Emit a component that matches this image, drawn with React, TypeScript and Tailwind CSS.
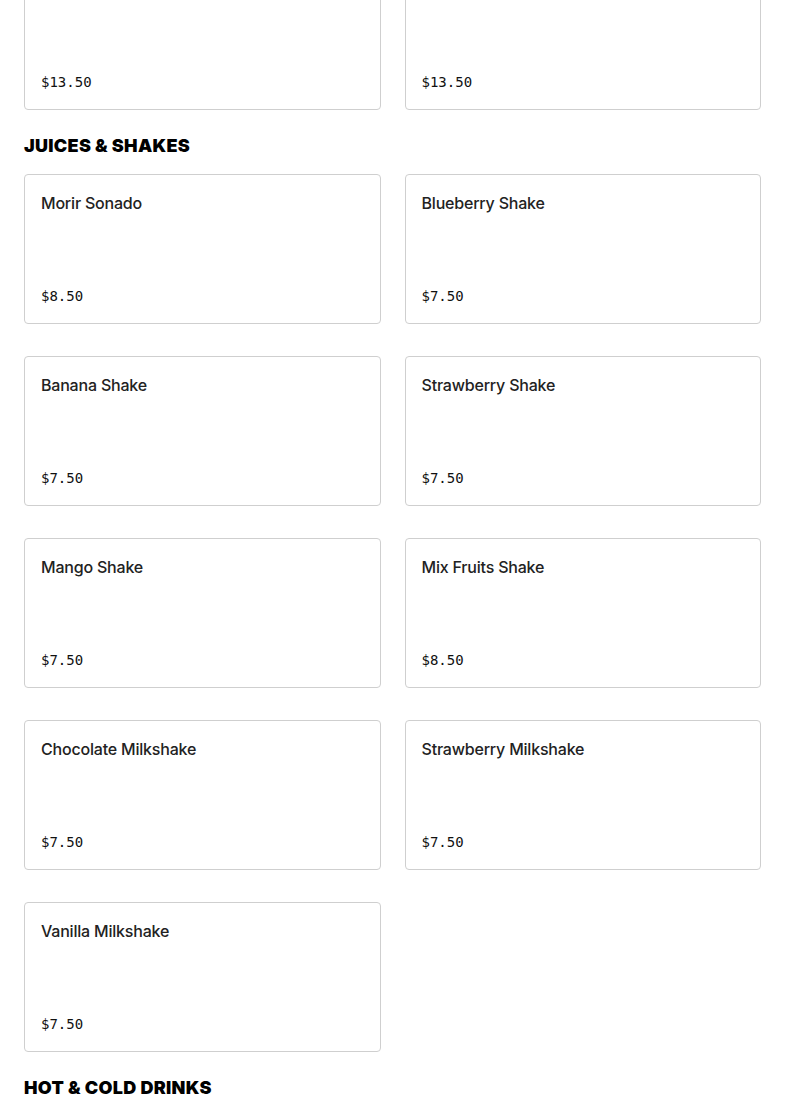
import React from 'react';

type Item = { name: string; price: string };

const PREV: Item[] = [
  { name: '', price: '$13.50' },
  { name: '', price: '$13.50' },
];

const SHAKES: Item[] = [
  { name: 'Morir Sonado', price: '$8.50' },
  { name: 'Blueberry Shake', price: '$7.50' },
  { name: 'Banana Shake', price: '$7.50' },
  { name: 'Strawberry Shake', price: '$7.50' },
  { name: 'Mango Shake', price: '$7.50' },
  { name: 'Mix Fruits Shake', price: '$8.50' },
  { name: 'Chocolate Milkshake', price: '$7.50' },
  { name: 'Strawberry Milkshake', price: '$7.50' },
  { name: 'Vanilla Milkshake', price: '$7.50' },
];

function Card({ item }: { item: Item }) {
  return (
    <div className="flex h-[150px] flex-col justify-between rounded-[4px] border border-[#cfcfcf] bg-white p-4">
      <div className="text-[16px] leading-6 font-medium text-[#222] font-['Inter',sans-serif] tracking-[-0.2px]">
        {item.name}
      </div>
      <div className="text-[14px] leading-[22px] text-[#111] font-['DejaVu_Sans_Mono',monospace]">
        {item.price}
      </div>
    </div>
  );
}

function Heading({ children }: { children: React.ReactNode }) {
  return (
    <h2 className="mt-[22px] mb-[14px] h-7 text-[18px] leading-7 font-black uppercase text-black font-['Inter',sans-serif] tracking-[0.3px]">
      {children}
    </h2>
  );
}

export default function App() {
  return (
    <div className="min-h-screen overflow-hidden bg-white px-6">
      <div className="-mt-[40px] grid grid-cols-2 gap-x-6 gap-y-8">
        {PREV.map((it, i) => (
          <Card key={i} item={it} />
        ))}
      </div>
      <Heading>Juices &amp; Shakes</Heading>
      <div className="grid grid-cols-2 gap-x-6 gap-y-8">
        {SHAKES.map((it) => (
          <Card key={it.name} item={it} />
        ))}
      </div>
      <Heading>Hot &amp; Cold Drinks</Heading>
    </div>
  );
}
